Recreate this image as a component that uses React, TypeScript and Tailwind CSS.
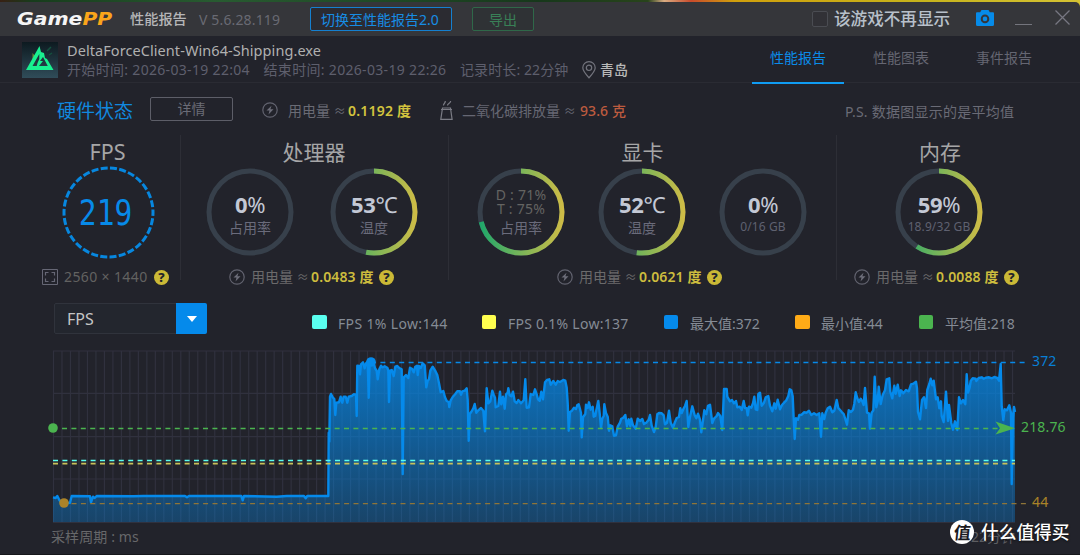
import React from "react";

const plotSegments: { origin: number; points: string }[] = [
  {
    origin: 0,
    points:
      "159,472 167,474 172,468 177,478 183,488 192,490 210,488 215,468 270,469 273,487 279,470 284,474 290,468 400,469 430,468 555,468 561,472 567,468 724,468 728,481 732,468 830,470 860,468 912,468 917,475 922,468 984,468",
  },
  {
    origin: 960,
    points:
      "25,468 26,278 28,305 30,170 33,162 38,172 43,177 46,225 49,188 57,187 62,170 67,188 71,170 77,170 82,188 86,170 95,168 101,163 108,164 110,228 112,77 117,78 120,103 123,73 129,67 134,85 138,70 143,65 146,173 149,62 160,62 165,85 170,92 173,118 178,88 183,77 187,82 194,79 202,83 205,92 207,186 210,92 215,90 221,108 226,80 232,78 238,84 245,88 248,402 251,112 258,105 265,114 270,83 276,86 281,97 286,80 291,77 293,105 297,78 302,84 308,70 314,76 319,142 323,122 327,118 331,92 338,80 345,91 352,105 357,130 362,157 370,153 375,172 380,183 386,186 388,201 392,181 398,171 406,162 412,154 420,154 423,164 427,154 434,152 440,145 443,180 446,302 449,222 455,214 460,205 464,192 469,218 475,211 483,204 490,212 495,274 500,145 505,190 511,184 517,152 521,164 525,173 527,202 535,198 540,155 544,193 549,170 554,206 558,163 563,158 565,145 569,166 574,169 579,155 584,184 590,189 595,180 603,190 611,181 616,118 620,203 627,202 632,162 640,165 645,148 650,163 654,178 659,182 664,155 669,178 675,127 681,120 688,118 692,134 700,123 707,134 713,123 720,126 730,120 736,122 740,143 743,190 746,272 750,216 756,212 762,203 768,207 772,195",
  },
  {
    origin: 1710,
    points:
      "26,193 30,207 33,219 35,292 39,232 46,222 48,194 53,204 57,187 62,209 68,200 71,230 76,228 79,211 85,183 89,220 93,264 97,236 101,228 103,193 108,219 113,230 117,272 121,256 127,259 132,287 138,286 143,260 150,248 154,236 160,233 166,225 171,259 176,238 181,258 184,236 189,256 197,266 203,236 210,243 217,237 222,252 229,248 236,239 240,225 245,257 252,276 257,261 262,223 267,219 275,220 281,226 285,253 291,248 297,212 302,248 309,263 315,246 320,234 327,231 331,205 335,219 341,205 345,198 350,183 355,261 360,231 367,199 374,226 379,235 384,221 390,239 394,277 399,241 403,211 409,223 414,197 420,194 427,249 432,236 440,228 444,219 451,228 457,270 462,147 470,147 472,170 480,184 486,180 492,190 498,183 502,202 509,200 515,210 521,183 525,204 530,205 533,226 537,200 544,203 549,190 553,170 557,208 562,210 565,162 570,158 575,197 582,188 587,172 595,168 600,197 607,214 613,190 617,206 623,179 630,208 636,195 642,188 649,181 655,168 659,148 664,151 668,169 671,238 674,297 678,235 684,239 688,225 695,224 702,217 710,218 717,212 724,225 732,220 740,225 748,220 753,290 757,220 763,237 767,218 773,205",
  },
  {
    origin: 2460,
    points:
      "30,200 37,217 43,212 50,180 55,204 61,211 66,217 71,222 76,237 81,254 86,211 93,216 99,209 103,191 107,157 112,175 117,186 122,176 127,184 131,195 135,144 141,218 147,220 150,266 155,218 160,211 164,110 169,202 173,185 176,140 182,192 188,165 195,151 200,118 208,115 211,155 217,175 223,137 227,161 233,134 239,168 243,151 250,160 258,150 266,154 273,133 280,131 288,125 291,145 294,216 300,238 306,180 312,172 318,204 322,150 328,132 332,116 337,136 341,122 348,178 353,172 358,205 363,184 365,228 371,246 378,155 384,243 387,195 394,249 399,269 405,244 412,270 417,172 423,190 429,180 436,193 440,103 444,158 449,142 452,123 458,115 467,116 469,123 476,114 485,112 491,116 497,113 507,112 516,115 523,111 532,114 537,122 542,72 545,198 550,240 554,208 561,211 568,196 573,218 575,432 579,232 582,201 585,216",
  },
];

const line = plotSegments
  .map((s) =>
    s.points
      .split(" ")
      .map((p) => {
        const [x, y] = p.split(",").map(Number);
        return `${((x + s.origin) / 3).toFixed(1)},${(y / 3).toFixed(1)}`;
      })
      .join(" "),
  )
  .join(" ");

function Bolt() {
  return (
    <svg className="block h-4 w-4 shrink-0" viewBox="0 0 16 16" fill="none">
      <circle cx="8" cy="8" r="7.2" stroke="#62636f" strokeWidth="1.2" />
      <path d="M9.5 3.7 4.5 8.6h3l-1 3.8 5-5.1H8.4z" fill="#6d6e7a" />
    </svg>
  );
}

function Help() {
  return (
    <span className="flex h-[15px] w-[15px] shrink-0 items-center justify-center rounded-full bg-[#cbb936] text-[13px] leading-none font-extrabold text-[#22232b]">
      ?
    </span>
  );
}

function Energy({ value }: { value: string }) {
  return (
    <div className="flex h-5 items-center leading-5 whitespace-nowrap">
      <Bolt />
      <span className="ml-[6px] w-[60px] text-[14px] text-[#6b6a6b]">
        用电量 <span className="text-[12px]">≈</span>
      </span>
      <span className="w-[68px] text-[14px] font-semibold tracking-[0.13px] text-[#cdbd3e]">{value} 度</span>
      <Help />
    </div>
  );
}

function Ring({ percent, id, children }: { percent: number; id: string; children: React.ReactNode }) {
  const length = 2 * Math.PI * 41;
  return (
    <div className="relative h-[88px] w-[88px] shrink-0">
      <svg className="block h-[88px] w-[88px]" viewBox="0 0 88 88" fill="none">
        <defs>
          <linearGradient id={id} gradientUnits="userSpaceOnUse" x1="0" y1="0" x2="0" y2="88">
            <stop offset="0" stopColor="#18a66b" />
            <stop offset="0.5" stopColor="#7ab559" />
            <stop offset="1" stopColor="#d2bc45" />
          </linearGradient>
        </defs>
        <circle cx="44" cy="44" r="41" stroke="#37404b" strokeWidth="5" />
        {percent > 0 && (
          <circle
            cx="44"
            cy="44"
            r="41"
            stroke={`url(#${id})`}
            strokeWidth="5"
            strokeDasharray={`${(length * percent) / 100} ${length}`}
            transform="rotate(-90 44 44)"
          />
        )}
      </svg>
      <div className="absolute inset-0 flex flex-col items-center whitespace-nowrap">{children}</div>
    </div>
  );
}

function Reading({ value, unit, label, small }: { value: string; unit: string; label: string; small?: boolean }) {
  return (
    <>
      <div className="mt-[24px] h-6 text-[22px] leading-6 tracking-[-0.4px] text-[#c3c8d5]">
        <span className="font-bold">{value}</span>
        <span>{unit}</span>
      </div>
      <div
        className={
          small
            ? "mt-[1px] text-[12px] leading-5 tracking-[0.1px] text-[#5f6170]"
            : "mt-[2px] text-[14px] leading-5 text-[#6a6b7b]"
        }
      >
        {label}
      </div>
    </>
  );
}

function TitleBar() {
  return (
    <header className="flex h-[34px] shrink-0 items-center rounded-tr-[5px] bg-[#35363a] whitespace-nowrap">
      <div className="ml-[17px] w-[113px]">
        <span className="inline-block origin-left scale-x-[1.13] font-['DejaVu_Sans',sans-serif] text-[18px] leading-[34px] font-bold text-[#f5f5f5] italic">
          Game<span className="text-[#faa51a]">PP</span>
        </span>
      </div>
      <div className="w-[69px] text-[14.2px] font-medium text-[#b6b6b8]">性能报告</div>
      <div className="w-[111px] text-[14px] tracking-[0.15px] text-[#696a73]">V 5.6.28.119</div>
      <button className="h-[24px] w-[142px] shrink-0 rounded-[2px] border border-[#1580d0] bg-[#2b2b31] text-center text-[14px] leading-[21px] text-[#178de4]">
        <span className="-ml-[2px]">切换至性能报告2.0</span>
      </button>
      <button className="ml-[20px] h-[24px] w-[62px] shrink-0 rounded-[2px] border border-[#2f6849] bg-[#2f3235] text-[14px] leading-[21px] text-[#398057]">
        导出
      </button>
      <div className="ml-[278px] h-4 w-4 shrink-0 rounded-[2px] border border-[#4a4c52] bg-[#313136]" />
      <div className="ml-[6px] w-[142px] text-[16.6px] font-medium text-[#b8c0ca]">该游戏不再显示</div>
      <svg className="-mt-[2px] h-4 w-[18px] shrink-0" viewBox="0 0 18 16">
        <path
          d="M5.500 0h7l1.300 2.200H17a1 1 0 0 1 1 1V14.500A1.500 1.500 0 0 1 16.500 16h-15A1.500 1.500 0 0 1 0 14.500V3.200a1 1 0 0 1 1-1h3.200z"
          fill="#068be9"
        />
        <circle cx="9" cy="8.900" r="3.300" fill="#068be9" stroke="#35363a" strokeWidth="2" />
      </svg>
      <div className="mt-[10px] ml-[21px] h-px w-[17px] shrink-0 bg-[#74757d]" />
      <svg className="mb-[3px] ml-[23px] h-[15px] w-[15px] shrink-0" viewBox="0 0 15 15" stroke="#777782" strokeWidth="1.300">
        <path d="M.5.5l14 14M14.500.5l-14 14" />
      </svg>
    </header>
  );
}

function SessionHeader() {
  return (
    <section className="flex h-[46px] shrink-0 border-b border-[#2a2b33] whitespace-nowrap">
      <svg className="mt-[5px] ml-[22px] h-[36px] w-[36px] shrink-0" viewBox="0 0 36 36" fill="none">
        <defs>
          <linearGradient id="tile" x1="0" y1="0" x2="0" y2="1">
            <stop stopColor="#0d1a20" />
            <stop offset="1" stopColor="#304c59" />
          </linearGradient>
        </defs>
        <path d="M0 0h36v36H0z" fill="url(#tile)" />
        <path d="M25 9l4-4M27 13l3-2" stroke="#15513f" strokeWidth="1.500" />
        <path d="M10.500 18v-7l2.500 3z" fill="#6d8a35" />
        <path
          d="M17.500 4 4 28h27.500L25 17l-2-1-1-5-3-1zM17.300 12v5l-1.800 4-.8 3H10.500zM21 15l4.800 9H17l4-5h-3z"
          fill="#19f090"
          fillRule="evenodd"
        />
      </svg>
      <div className="ml-[9px] w-[686px]">
        <div className="mt-[3px] h-5 text-[14.500px] leading-5 tracking-[0.070px] text-[#b0b0b0]">DeltaForceClient-Win64-Shipping.exe</div>
        <div className="flex h-5 items-center text-[14px] leading-5 text-[#5e5f6d]">
          <span className="w-[196.500px] tracking-[0.320px]">开始时间: 2026-03-19 22:04</span>
          <span className="w-[196.500px] tracking-[0.320px]">结束时间: 2026-03-19 22:26</span>
          <span className="w-[122px] tracking-[0.100px]">记录时长: 22分钟</span>
          <svg className="h-[18px] w-[14px]" viewBox="0 0 14 18" fill="none" stroke="#73747d" strokeWidth="1.200">
            <path d="M7 16.800C4 13.500.8 10 .8 6.800a6.200 6.200 0 0 1 12.400 0C13.200 10 10 13.500 7 16.800z" />
            <circle cx="7" cy="6.800" r="2.700" />
          </svg>
          <span className="ml-[4px] font-medium text-[#b9b9b9]">青岛</span>
        </div>
      </div>
      <nav className="flex text-[14px] leading-[42px] text-[#656672]">
        <span className="-ml-px h-[47px] w-[92px] border-b-2 border-[#109cf3] text-center text-[#0b8ce8]">性能报告</span>
        <span className="ml-[11px] w-[92px] text-center">性能图表</span>
        <span className="ml-[11px] w-[92px] text-center">事件报告</span>
      </nav>
    </section>
  );
}

function StatusBar() {
  return (
    <section className="flex h-[52px] shrink-0 items-center pt-[2px] text-[14px] leading-5 whitespace-nowrap">
      <h1 className="mt-[2px] ml-[57px] w-[93px] text-[19px] text-[#1188df]">硬件状态</h1>
      <button className="mb-[2px] h-[24px] w-[83px] shrink-0 rounded-[2px] border border-[#5d5e68] leading-[22px] text-[#6b6c77]">详情</button>
      <div className="ml-[29px]">
        <Bolt />
      </div>
      <span className="mt-[2px] ml-[10px] w-[60px] text-[#6a6b75]">
        用电量 <span className="text-[12px]">≈</span>
      </span>
      <span className="mt-[2px] w-[92px] font-semibold tracking-[0.200px] text-[#d3c33e]">0.1192 度</span>
      <svg className="h-[20px] w-[13px] shrink-0" viewBox="0 0 13 20" fill="none" stroke="#7b7c85" strokeWidth="1.200">
        <path d="M2.500 8h8l1.600 11.300H.8zM1 9.500h11M3.500 5.500c-.2-2 2-2 1.800-4.500M7.500 5.500c-.2-2 3-2 3.200-4.500" />
      </svg>
      <span className="mt-[2px] ml-[9px] w-[118px] text-[#666773]">
        二氧化碳排放量 <span className="text-[12px]">≈</span>
      </span>
      <span className="mt-[2px] w-[265px] font-medium tracking-[0.100px] text-[#bd5b3f]">93.6 克</span>
      <span className="mt-[4px] tracking-[0.250px] text-[#6a6b76]">P.S. 数据图显示的是平均值</span>
    </section>
  );
}

function Gauges() {
  return (
    <section className="flex h-[145px] shrink-0 text-[#a6a6a7]">
      <div className="flex w-[181px] flex-col border-r border-[#2d2e36] pl-[62px]">
        <h2 className="mt-[2px] w-[91px] text-center text-[21.500px] leading-[29px]">FPS</h2>
        <div className="relative h-[93px] w-[93px]">
          <svg className="block h-[93px] w-[93px]" viewBox="0 0 93 93" fill="none">
            <circle cx="46.500" cy="46.500" r="44.500" stroke="#0787df" strokeWidth="3" strokeDasharray="7 2.320" strokeDashoffset="3.500" />
          </svg>
          <div className="absolute inset-0 flex items-center justify-center">
            <span className="-ml-[6px] inline-block scale-x-[0.820] font-['DejaVu_Sans_Mono',monospace] text-[36px] leading-none text-[#078ae9]">219</span>
          </div>
        </div>
        <div className="-ml-[20px] mt-[8px] flex h-5 items-center leading-5 whitespace-nowrap">
          <svg className="h-4 w-4 shrink-0" viewBox="0 0 16 16" fill="none" stroke="#666775">
            <path d="M.5.5h15v15H.5z" />
            <path d="M3.500 6.500v-3h3M9.500 3.500h3v3M12.500 9.500v3h-3M6.500 12.500h-3v-3" strokeWidth="1.200" />
          </svg>
          <span className="ml-[6px] w-[90px] text-[14px] tracking-[0.380px] text-[#626261]">2560 × 1440</span>
          <Help />
        </div>
      </div>

      <div className="flex w-[268px] flex-col border-r border-[#2d2e36]">
        <h2 className="mt-[2px] -ml-[1px] text-center text-[21px] leading-[31px]">处理器</h2>
        <div className="flex gap-[36px] pl-[25px]">
          <Ring percent={0} id="cpu-load">
            <Reading value="0" unit="%" label="占用率" />
          </Ring>
          <Ring percent={53} id="cpu-temp">
            <Reading value="53" unit="℃" label="温度" />
          </Ring>
        </div>
        <div className="mt-[11px] ml-[48px]">
          <Energy value="0.0483" />
        </div>
      </div>

      <div className="flex w-[388px] flex-col border-r border-[#2d2e36]">
        <h2 className="mt-[2px] text-center text-[21px] leading-[31px]">显卡</h2>
        <div className="flex gap-[33px] pl-[28px]">
          <Ring percent={71} id="gpu-load">
            <div className="mt-[20px] text-center text-[14px] leading-[14px] tracking-[0.250px] text-[#646462]">
              <div>D : 71%</div>
              <div>T : 75%</div>
            </div>
            <div className="mt-[2px] text-[14px] leading-5 text-[#6a6b7b]">占用率</div>
          </Ring>
          <Ring percent={52} id="gpu-temp">
            <Reading value="52" unit="℃" label="温度" />
          </Ring>
          <Ring percent={0} id="gpu-memory">
            <Reading value="0" unit="%" label="0/16 GB" small />
          </Ring>
        </div>
        <div className="mt-[11px] ml-[108px]">
          <Energy value="0.0621" />
        </div>
      </div>

      <div className="flex w-[206px] flex-col">
        <h2 className="mt-[2px] text-center text-[21px] leading-[31px]">内存</h2>
        <div className="pl-[58px]">
          <Ring percent={59} id="memory-load">
            <Reading value="59" unit="%" label="18.9/32 GB" small />
          </Ring>
        </div>
        <div className="mt-[11px] ml-[17px]">
          <Energy value="0.0088" />
        </div>
      </div>
    </section>
  );
}

function Legend() {
  return (
    <section className="mt-[23px] flex h-[31px] shrink-0 items-center text-[14px] leading-5 whitespace-nowrap text-[#858b95]">
      <div className="ml-[54px] flex h-[31px] w-[153px] shrink-0 items-center rounded-[2px] border border-[#30333c] bg-[#23262e]">
        <span className="ml-[12px] w-[109px] shrink-0 text-[16px] text-[#c5c5c5]">FPS</span>
        <span className="flex h-[31px] w-[31px] shrink-0 items-center justify-center rounded-r-[2px] bg-[#058aeb]">
          <svg className="h-[6px] w-[10px]" viewBox="0 0 10 6">
            <path d="M0 0h10L5 6z" fill="#fff" />
          </svg>
        </span>
      </div>
      <i className="mt-[7px] ml-[105px] h-[14px] w-[15px] shrink-0 rounded-[2px] bg-[#5affef]" />
      <span className="mt-[11px] ml-[11px] w-[144px] tracking-[0.350px]">FPS 1% Low:144</span>
      <i className="mt-[7px] h-[14px] w-[14px] shrink-0 rounded-[2px] bg-[#ffff4f]" />
      <span className="mt-[11px] ml-[12px] w-[156px] tracking-[0.250px]">FPS 0.1% Low:137</span>
      <i className="mt-[7px] h-[14px] w-[14px] shrink-0 rounded-[2px] bg-[#058aeb]" />
      <span className="mt-[11px] ml-[12px] w-[105px]">最大值:372</span>
      <i className="mt-[7px] h-[14px] w-[15px] shrink-0 rounded-[2px] bg-[#ffab17]" />
      <span className="mt-[11px] ml-[11px] w-[98px]">最小值:44</span>
      <i className="mt-[7px] h-[14px] w-[14px] shrink-0 rounded-[2px] bg-[#4bb44f]" />
      <span className="mt-[11px] ml-[12px]">平均值:218</span>
    </section>
  );
}

function Chart() {
  return (
    <svg className="mt-[6px] block h-[185px] w-[1080px] shrink-0" viewBox="0 0 1080 185" fill="none">
      <defs>
        <linearGradient id="area" gradientUnits="userSpaceOnUse" x1="0" y1="22" x2="0" y2="182">
          <stop stopColor="#058aeb" stopOpacity="0.780" />
          <stop offset="1" stopColor="#058aeb" stopOpacity="0.320" />
        </linearGradient>
      </defs>
      <g stroke="#30313e" strokeWidth="1.200">
        {Array.from({ length: 114 }, (_, i) => (
          <path key={i} d={`M${(53.5 + i * 8.487).toFixed(2)} 11V182`} />
        ))}
        <path d="M53 11H1015M53 53.300H1015M53 96.700H1015M53 139H1015M53 182.500H1015" />
      </g>
      <polygon points={`53,182 ${line} 1015,182`} fill="url(#area)" />
      <polyline points={line} stroke="#058aeb" strokeWidth="2.400" strokeLinejoin="round" />
      <g strokeDasharray="5 4.400" strokeWidth="1.300">
        <path d="M371 22.500H1027" stroke="#0789e8" />
        <path d="M62 88.500H1005" stroke="#4bb44f" />
        <path d="M53 120.500H1015" stroke="#5affef" />
        <path d="M53 123.700H1015" stroke="#c9c25a" strokeWidth="1.800" />
        <path d="M71.500 163.600H1027" stroke="#8f7538" />
      </g>
      <circle cx="53" cy="88" r="4.800" fill="#4bb44f" />
      <circle cx="64" cy="163" r="4.800" fill="#ab8328" />
      <circle cx="371" cy="22" r="4.800" fill="#058aeb" />
      <path d="M995.500 81.500 1015 88.300 995.500 94.500 1000 88.300z" fill="#4bb44f" />
      <g fontSize="14" letterSpacing="0.150">
        <text x="1032" y="26" fill="#087fd5">372</text>
        <text x="1021" y="91.500" fill="#4bb44f">218.76</text>
        <text x="1032" y="167" fill="#ab8328">44</text>
      </g>
    </svg>
  );
}

function Footer() {
  return (
    <footer className="relative flex flex-1 border-b border-[#16171b] pl-[51px] text-[14px] leading-5 whitespace-nowrap text-[#67686a]">
      <span className="mt-[2px] w-[920px] tracking-[0.100px]">采样周期 : ms</span>
      <span className="mt-[2px] text-[#5d5e62]">22分钟</span>
      <div className="absolute -top-[5px] left-[950px] flex items-center">
        <span className="flex h-6 w-6 items-center justify-center rounded-full bg-white text-[17px] leading-none font-bold text-[#1b1b1f]">
          <span className="-skew-x-6">值</span>
        </span>
        <span className="ml-[7px] text-[17.700px] leading-6 font-medium text-white [text-shadow:0_1px_2px_#111]">什么值得买</span>
      </div>
    </footer>
  );
}

export default function App() {
  return (
    <div className="flex h-[555px] w-[1080px] flex-col overflow-hidden bg-[linear-gradient(90deg,#382013_0,#173c1c_3%,#285b31_20%,#17381b_50%,#28441b_60%,#d9ac82_61.500%,#c94b2b_64%,#d0a00c_68%,#c6b31b_85%,#d4c233_100%)] pt-[2px] font-['Noto_Sans','Noto_Sans_CJK_SC',sans-serif]">
      <TitleBar />
      <main className="flex flex-1 flex-col bg-[#22232b] pt-px">
        <SessionHeader />
        <StatusBar />
        <Gauges />
        <Legend />
        <Chart />
        <Footer />
      </main>
    </div>
  );
}
